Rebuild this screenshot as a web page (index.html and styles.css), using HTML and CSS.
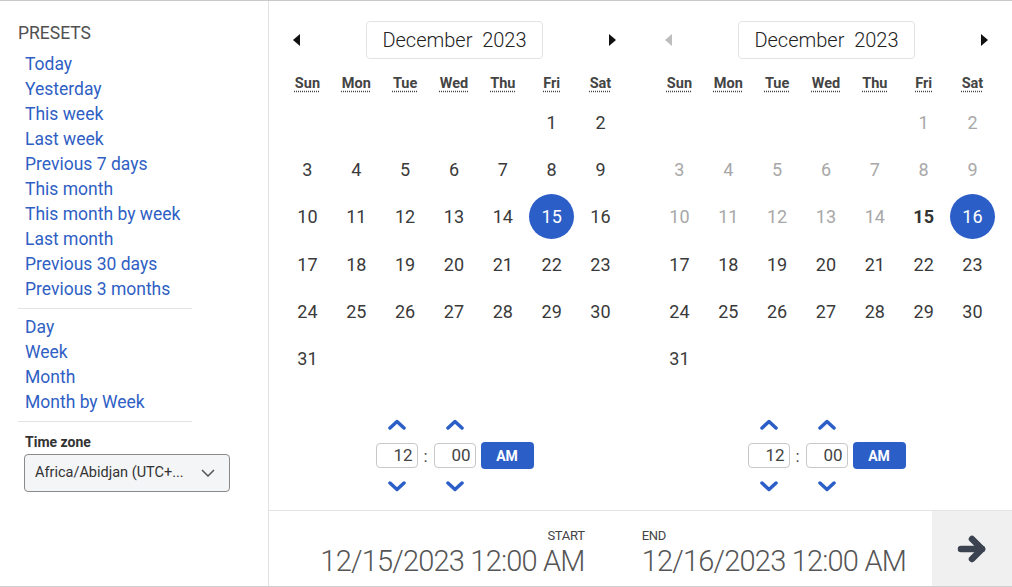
FILE: index.html
```html
<!DOCTYPE html>
<html>
<head>
<meta charset="utf-8">
<link rel="stylesheet" href="styles.css">
</head>
<body>
<div class="picker">
  <aside class="sidebar">
    <div class="presets-title">PRESETS</div>
    <ul class="preset-list">
      <li>Today</li>
      <li>Yesterday</li>
      <li>This week</li>
      <li>Last week</li>
      <li>Previous 7 days</li>
      <li>This month</li>
      <li>This month by week</li>
      <li>Last month</li>
      <li>Previous 30 days</li>
      <li>Previous 3 months</li>
    </ul>
    <hr class="divider">
    <ul class="preset-list">
      <li>Day</li>
      <li>Week</li>
      <li>Month</li>
      <li>Month by Week</li>
    </ul>
    <hr class="divider">
    <div class="tz-label">Time zone</div>
    <div class="tz-select">
      <span>Africa/Abidjan (UTC+...</span>
      <svg width="14" height="8" viewBox="0 0 14 8"><polyline points="1,1 7,7 13,1" fill="none" stroke="#555" stroke-width="1.5"/></svg>
    </div>
  </aside>
  <main class="main">
    <div class="calendars">
      <section class="calendar">
        <div class="cal-head">
          <span class="nav nav-prev"></span>
          <div class="month-btn">December&nbsp; 2023</div>
          <span class="nav nav-next"></span>
        </div>
        <div class="grid">
          <abbr>Sun</abbr><abbr>Mon</abbr><abbr>Tue</abbr><abbr>Wed</abbr><abbr>Thu</abbr><abbr>Fri</abbr><abbr>Sat</abbr>
          <span></span><span></span><span></span><span></span><span></span><span class="d">1</span><span class="d">2</span>
          <span class="d">3</span><span class="d">4</span><span class="d">5</span><span class="d">6</span><span class="d">7</span><span class="d">8</span><span class="d">9</span>
          <span class="d">10</span><span class="d">11</span><span class="d">12</span><span class="d">13</span><span class="d">14</span><span class="d sel"><b>15</b></span><span class="d">16</span>
          <span class="d">17</span><span class="d">18</span><span class="d">19</span><span class="d">20</span><span class="d">21</span><span class="d">22</span><span class="d">23</span>
          <span class="d">24</span><span class="d">25</span><span class="d">26</span><span class="d">27</span><span class="d">28</span><span class="d">29</span><span class="d">30</span>
          <span class="d">31</span>
        </div>
        <div class="time">
          <div class="tcol">
            <svg class="chev" width="18" height="11" viewBox="0 0 18 11"><polyline points="2,9 9,2.5 16,9"/></svg>
            <div class="tinput">12</div>
            <svg class="chev" width="18" height="11" viewBox="0 0 18 11"><polyline points="2,2 9,8.5 16,2"/></svg>
          </div>
          <span class="colon">:</span>
          <div class="tcol">
            <svg class="chev" width="18" height="11" viewBox="0 0 18 11"><polyline points="2,9 9,2.5 16,9"/></svg>
            <div class="tinput">00</div>
            <svg class="chev" width="18" height="11" viewBox="0 0 18 11"><polyline points="2,2 9,8.5 16,2"/></svg>
          </div>
          <div class="ampm">AM</div>
        </div>
      </section>
      <section class="calendar">
        <div class="cal-head">
          <span class="nav nav-prev disabled"></span>
          <div class="month-btn">December&nbsp; 2023</div>
          <span class="nav nav-next"></span>
        </div>
        <div class="grid">
          <abbr>Sun</abbr><abbr>Mon</abbr><abbr>Tue</abbr><abbr>Wed</abbr><abbr>Thu</abbr><abbr>Fri</abbr><abbr>Sat</abbr>
          <span></span><span></span><span></span><span></span><span></span><span class="d off">1</span><span class="d off">2</span>
          <span class="d off">3</span><span class="d off">4</span><span class="d off">5</span><span class="d off">6</span><span class="d off">7</span><span class="d off">8</span><span class="d off">9</span>
          <span class="d off">10</span><span class="d off">11</span><span class="d off">12</span><span class="d off">13</span><span class="d off">14</span><span class="d start">15</span><span class="d sel"><b>16</b></span>
          <span class="d">17</span><span class="d">18</span><span class="d">19</span><span class="d">20</span><span class="d">21</span><span class="d">22</span><span class="d">23</span>
          <span class="d">24</span><span class="d">25</span><span class="d">26</span><span class="d">27</span><span class="d">28</span><span class="d">29</span><span class="d">30</span>
          <span class="d">31</span>
        </div>
        <div class="time">
          <div class="tcol">
            <svg class="chev" width="18" height="11" viewBox="0 0 18 11"><polyline points="2,9 9,2.5 16,9"/></svg>
            <div class="tinput">12</div>
            <svg class="chev" width="18" height="11" viewBox="0 0 18 11"><polyline points="2,2 9,8.5 16,2"/></svg>
          </div>
          <span class="colon">:</span>
          <div class="tcol">
            <svg class="chev" width="18" height="11" viewBox="0 0 18 11"><polyline points="2,9 9,2.5 16,9"/></svg>
            <div class="tinput">00</div>
            <svg class="chev" width="18" height="11" viewBox="0 0 18 11"><polyline points="2,2 9,8.5 16,2"/></svg>
          </div>
          <div class="ampm">AM</div>
        </div>
      </section>
    </div>
    <footer class="footer">
      <div class="range range-start">
        <div class="range-label">START</div>
        <div class="range-value">12/15/2023 12:00 AM</div>
      </div>
      <div class="range range-end">
        <div class="range-label">END</div>
        <div class="range-value">12/16/2023 12:00 AM</div>
      </div>
      <div class="go">
        <svg width="30" height="30" viewBox="0 0 30 30"><g fill="none" stroke="#3b4250" stroke-width="6.5" stroke-linecap="round" stroke-linejoin="round"><line x1="4" y1="15" x2="25" y2="15"/><polyline points="15,5 25,15 15,25"/></g></svg>
      </div>
    </footer>
  </main>
</div>
</body>
</html>
```
FILE: styles.css
```css
* { box-sizing: border-box; }
html, body { margin: 0; padding: 0; background: #fff; }
body { font-family: Roboto, "Liberation Sans", sans-serif; color: #333; }

.picker {
  display: flex;
  width: 1012px;
  height: 587px;
  border-top: 1px solid #c9c9c9;
  border-bottom: 1px solid #cfcfcf;
}

.sidebar {
  width: 269px;
  flex: none;
  border-right: 1px solid #e2e2e2;
  padding: 22px 0 0 18px;
}
.presets-title {
  font-size: 17.5px;
  line-height: 20px;
  color: #505050;
}
.preset-list {
  list-style: none;
  margin: 8.5px 0 0 7px;
  padding: 0;
}
.preset-list li {
  font-size: 17.5px;
  line-height: 25px;
  color: #2f5fc4;
}
.divider {
  width: 174px;
  margin: 6px 0 6px 0;
  border: 0;
  border-top: 1px solid #e3e3e3;
}
.divider + .preset-list { margin-top: 0; }
.tz-label {
  margin: 12px 0 0 7px;
  font-size: 14px;
  line-height: 16px;
  font-weight: 700;
  color: #333;
}
.tz-select {
  margin: 4px 0 0 6px;
  width: 206px;
  height: 38px;
  border: 1px solid #8a8a8a;
  border-radius: 4px;
  background: #f4f5f7;
  display: flex;
  align-items: center;
  justify-content: space-between;
  padding: 0 14px 0 10px;
  font-size: 14.5px;
  color: #333;
}

.main {
  flex: 1;
  display: flex;
  flex-direction: column;
}
.calendars {
  flex: 1;
  display: flex;
  gap: 29px;
  padding: 20px 14px 0 14px;
}
.calendar { width: 343px; }
.cal-head {
  display: flex;
  align-items: center;
  justify-content: space-between;
  height: 38px;
  padding: 0 10px 0 10px;
}
.nav {
  width: 0; height: 0;
  border-top: 6px solid transparent;
  border-bottom: 6px solid transparent;
}
.nav-prev { border-right: 7px solid #111; }
.nav-next { border-left: 7px solid #111; }
.nav-prev.disabled { border-right-color: #bdbdbd; }
.month-btn {
  width: 177px;
  height: 38px;
  border: 1px solid #e3e3e3;
  border-radius: 4px;
  display: flex;
  align-items: center;
  justify-content: center;
  font-size: 20px;
  font-weight: 300;
  color: #222;
}

.grid {
  display: grid;
  grid-template-columns: repeat(7, 48.85px);
  grid-template-rows: 28px;
  grid-auto-rows: 47.3px;
  margin-top: 11.5px;
}
.grid abbr {
  display: flex;
  align-items: center;
  justify-content: center;
  font-size: 14.5px;
  font-weight: 700;
  color: #444;
  text-decoration: underline dotted;
  text-underline-offset: 3px;
  margin-bottom: 1.5px;
}
.d {
  display: flex;
  align-items: center;
  justify-content: center;
  font-size: 18px;
  color: #3a3a3a;
}
.d.off { color: #a8a8a8; }
.d.start { font-weight: 700; color: #333; }
.d.sel b {
  display: flex;
  align-items: center;
  justify-content: center;
  width: 45px;
  height: 45px;
  border-radius: 50%;
  background: #2c5ec8;
  color: #fff;
  font-weight: 400;
}

.time {
  display: flex;
  justify-content: center;
  align-items: center;
  margin-top: 37px;
}
.tcol {
  display: flex;
  flex-direction: column;
  align-items: center;
  gap: 13px;
}
.chev polyline {
  fill: none;
  stroke: #2c5ec8;
  stroke-width: 3.5;
  stroke-linecap: round;
  stroke-linejoin: round;
}
.tinput {
  width: 42px;
  height: 25px;
  border: 1px solid #c8c8c8;
  border-radius: 4px;
  text-align: right;
  padding-right: 4px;
  font-size: 17px;
  line-height: 23px;
  color: #444;
}
.colon {
  width: 16px;
  text-align: center;
  font-size: 17px;
  color: #444;
}
.ampm {
  margin-left: 5px;
  width: 53px;
  height: 27px;
  border-radius: 4px;
  background: #2c5ec8;
  color: #fff;
  font-size: 14px;
  font-weight: 700;
  display: flex;
  align-items: center;
  justify-content: center;
}

.footer {
  height: 76px;
  flex: none;
  border-top: 1px solid #e3e3e3;
  display: flex;
  justify-content: flex-end;
}
.range { padding-top: 17px; }
.range-start { text-align: right; margin-right: 57px; }
.range-end { margin-right: 26px; }
.range-label {
  font-size: 13px;
  line-height: 15px;
  color: #444;
  letter-spacing: -0.3px;
}
.range-value {
  margin-top: 3px;
  font-size: 29px;
  line-height: 30px;
  font-weight: 300;
  color: #555;
  letter-spacing: -0.8px;
}
.go {
  width: 80px;
  background: #f0f0f0;
  display: flex;
  align-items: center;
  justify-content: center;
}
```
